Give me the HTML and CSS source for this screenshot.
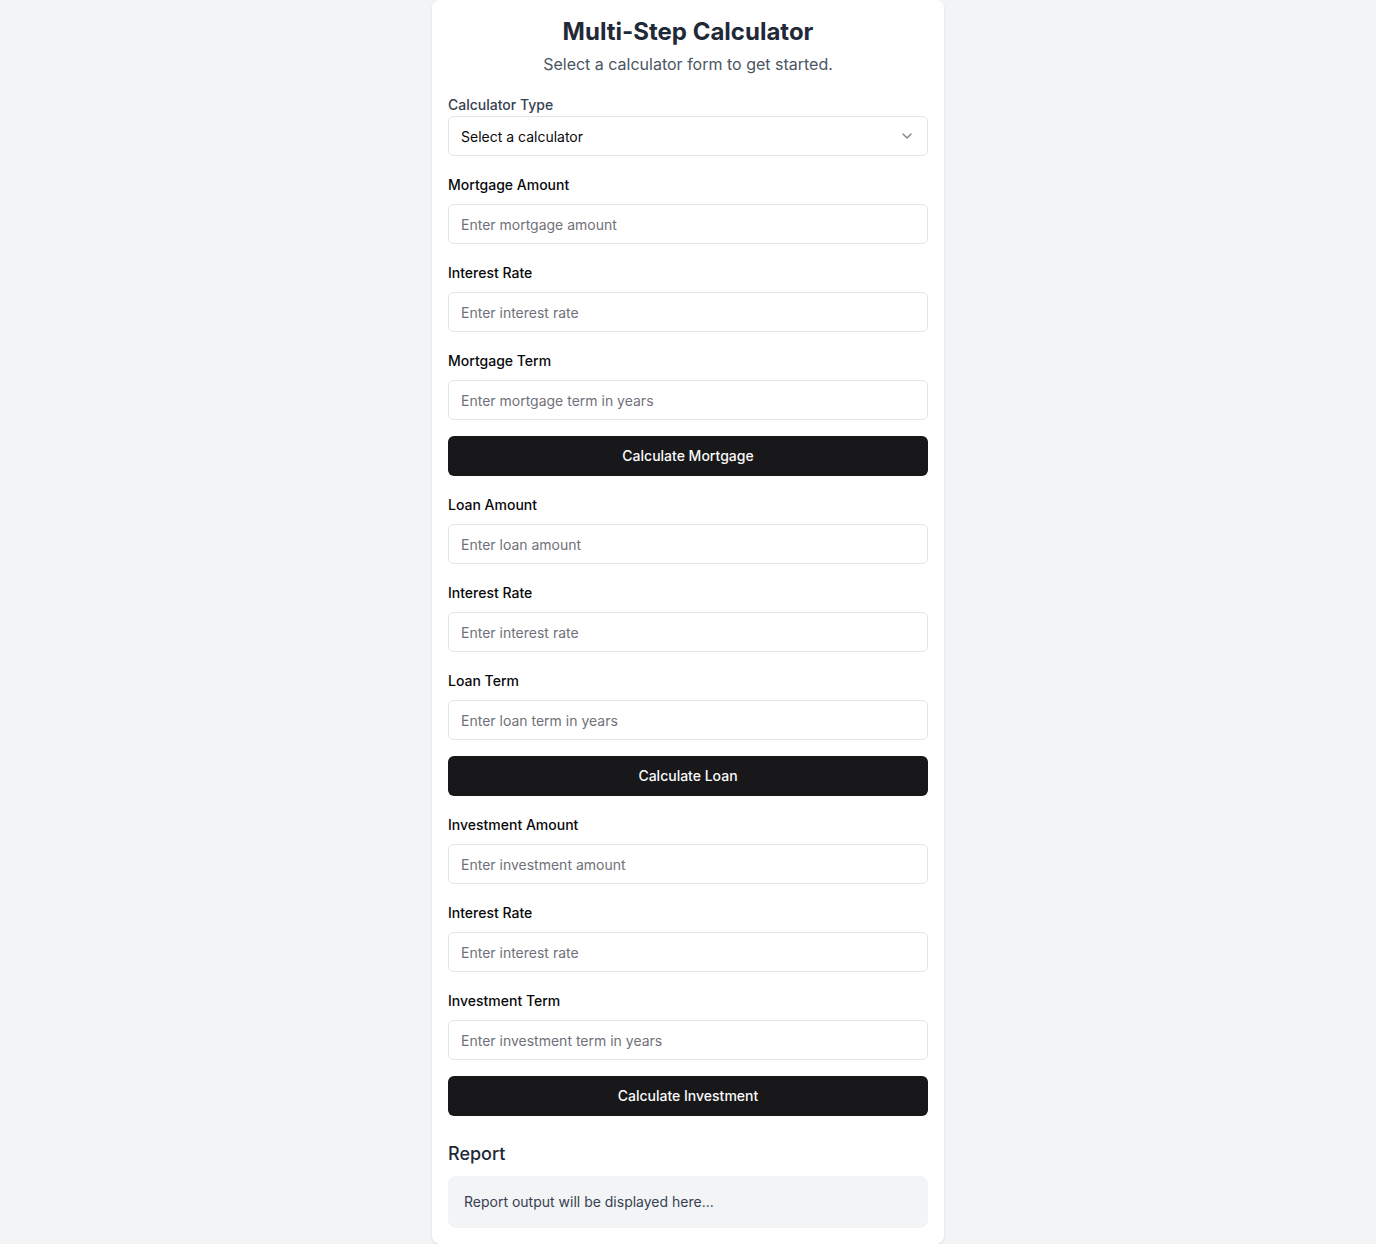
FILE: index.html
```html
<!DOCTYPE html>
<html lang="en">
<head>
<meta charset="utf-8">
<title>Multi-Step Calculator</title>
<link rel="stylesheet" href="styles.css">
</head>
<body>
<main class="card">
  <header class="head">
    <h1 class="title">Multi-Step Calculator</h1>
    <p class="subtitle">Select a calculator form to get started.</p>
  </header>

  <div class="type-field">
    <label class="type-label">Calculator Type</label>
    <div class="select">
      <span>Select a calculator</span>
      <svg class="chev" width="16" height="16" viewBox="0 0 24 24" fill="none" stroke="currentColor" stroke-width="2" stroke-linecap="round" stroke-linejoin="round"><path d="m6 9 6 6 6-6"/></svg>
    </div>
  </div>

  <section class="group">
    <div class="field"><label class="label">Mortgage Amount</label><input class="input" placeholder="Enter mortgage amount"></div>
    <div class="field"><label class="label">Interest Rate</label><input class="input" placeholder="Enter interest rate"></div>
    <div class="field"><label class="label">Mortgage Term</label><input class="input" placeholder="Enter mortgage term in years"></div>
    <button class="btn">Calculate Mortgage</button>
  </section>

  <section class="group">
    <div class="field"><label class="label">Loan Amount</label><input class="input" placeholder="Enter loan amount"></div>
    <div class="field"><label class="label">Interest Rate</label><input class="input" placeholder="Enter interest rate"></div>
    <div class="field"><label class="label">Loan Term</label><input class="input" placeholder="Enter loan term in years"></div>
    <button class="btn">Calculate Loan</button>
  </section>

  <section class="group">
    <div class="field"><label class="label">Investment Amount</label><input class="input" placeholder="Enter investment amount"></div>
    <div class="field"><label class="label">Interest Rate</label><input class="input" placeholder="Enter interest rate"></div>
    <div class="field"><label class="label">Investment Term</label><input class="input" placeholder="Enter investment term in years"></div>
    <button class="btn">Calculate Investment</button>
  </section>

  <section class="report">
    <h2 class="report-title">Report</h2>
    <div class="report-box">Report output will be displayed here...</div>
  </section>
</main>
</body>
</html>
```

FILE: styles.css
```css
* { box-sizing: border-box; }
html, body { margin: 0; padding: 0; }
body {
  background: #f3f4f6;
  font-family: Inter, "Noto Sans", sans-serif;
  color: #09090b;
}
.card {
  width: 512px;
  margin: 0 auto;
  background: #ffffff;
  border-radius: 8px;
  box-shadow: 0 1px 3px rgba(0,0,0,0.08), 0 1px 2px rgba(0,0,0,0.04);
  padding: 16px;
  display: flex;
  flex-direction: column;
}
.head { text-align: center; margin-bottom: 19px; }
.title {
  margin: 0;
  font-size: 24px;
  line-height: 32px;
  font-weight: 700;
  color: #1f2937;
}
.subtitle {
  margin: 4px 0 0;
  font-size: 16px;
  line-height: 24px;
  color: #4b5563;
}
.type-field { display: flex; flex-direction: column; }
.type-label {
  font-size: 14px;
  line-height: 20px;
  font-weight: 500;
  color: #374151;
  margin-bottom: 1px;
}
.select {
  height: 40px;
  border: 1px solid #e4e4e7;
  border-radius: 6px;
  padding: 0 12px;
  display: flex;
  align-items: center;
  justify-content: space-between;
  font-size: 14px;
  color: #09090b;
}
.chev { color: #09090b; opacity: 0.5; }
.group { display: flex; flex-direction: column; }
.field { display: flex; flex-direction: column; margin-top: 19px; }
.label {
  font-size: 14px;
  line-height: 20px;
  font-weight: 500;
  color: #09090b;
  margin-bottom: 9px;
}
.input {
  height: 40px;
  width: 100%;
  border: 1px solid #e4e4e7;
  border-radius: 6px;
  padding: 0 12px;
  font-family: inherit;
  font-size: 14px;
  color: #09090b;
  background: #fff;
  outline: none;
}
.input::placeholder { color: #71717a; }
.btn {
  margin-top: 16px;
  height: 40px;
  width: 100%;
  border: none;
  border-radius: 6px;
  padding: 0 16px 2px;
  background: #18181b;
  color: #fafafa;
  font-family: inherit;
  font-size: 14px;
  font-weight: 500;
}
.report { margin-top: 24px; }
.report-title {
  margin: 0 0 8px;
  font-size: 18px;
  line-height: 28px;
  font-weight: 500;
  color: #1f2937;
}
.report-box {
  background: #f3f4f6;
  border-radius: 8px;
  padding: 16px;
  font-size: 14px;
  line-height: 20px;
  color: #374151;
}
```
